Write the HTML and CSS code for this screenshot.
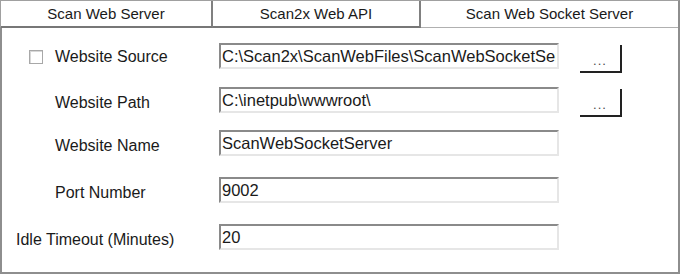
FILE: index.html
```html
<!DOCTYPE html>
<html>
<head>
    <title>Scan Web Socket Server</title>
    <link rel="stylesheet" href="styles.css">
</head>
<body>
    <div class="tabs">
        <div class="tab">Scan Web Server</div>
        <div class="tab">Scan2x Web API</div>
        <div class="tab active">Scan Web Socket Server</div>
    </div>
    <div class="panel">
        <form class="settings">
            <label class="field-label check-label">
                <span class="checkbox"></span>Website Source
            </label>
            <input class="text-box" type="text" value="C:\Scan2x\ScanWebFiles\ScanWebSocketServer" readonly>
            <button type="button" class="browse">...</button>

            <label class="field-label">Website Path</label>
            <input class="text-box" type="text" value="C:\inetpub\wwwroot\" readonly>
            <button type="button" class="browse">...</button>

            <label class="field-label">Website Name</label>
            <input class="text-box" type="text" value="ScanWebSocketServer" readonly>
            <span></span>

            <label class="field-label">Port Number</label>
            <input class="text-box" type="text" value="9002" readonly>
            <span></span>

            <label class="field-label wide-label">Idle Timeout (Minutes)</label>
            <input class="text-box" type="text" value="20" readonly>
            <span></span>
        </form>
    </div>
</body>
</html>
```

FILE: styles.css
```css
* {
    box-sizing: border-box;
}
body {
    margin: 0;
    width: 680px;
    background: #fff;
    color: #1a1a1a;
    font-family: "Liberation Sans", Arial, sans-serif;
}

/* tab strip */
.tabs {
    display: grid;
    grid-template-columns: 212px 208px 1fr;
    height: 27px;
    border-top: 1px solid #a0a0a0;
    border-left: 1px solid #a0a0a0;
    border-right: 2px solid #8e8e8e;
}
.tab {
    border-right: 2px solid #808080;
    border-bottom: 2px solid #777;
    text-align: center;
    font-size: 15px;
    line-height: 25px;
}
.tab.active {
    border-right: none;
    border-bottom: 1px solid #b0b0b0;
}

/* tab page */
.panel {
    height: 247px;
    border: 2px solid #8e8e8e;
    border-top: none;
}
.settings {
    display: grid;
    grid-template-columns: 196px 340px 42px;
    grid-template-rows: 44px 43px 47px 47px 26px;
    column-gap: 21px;
    padding-top: 16px;
}
.field-label {
    display: flex;
    align-items: center;
    height: 26px;
    padding: 6px 0 0 53px;
    font-size: 16px;
    white-space: nowrap;
}
.check-label {
    padding: 2px 0 0 27px;
}
.wide-label {
    padding-left: 14px;
}
.checkbox {
    width: 14px;
    height: 14px;
    margin-right: 12px;
    border: 1px solid #a8a8a8;
    box-shadow: inset 1px 1px 0 #d8d8d8;
}
.text-box {
    width: 340px;
    height: 26px;
    padding: 0 1px;
    border-style: solid;
    border-width: 2px;
    border-color: #8a8a8a #e6e6e6 #e6e6e6 #8a8a8a;
    font-family: "Liberation Sans", Arial, sans-serif;
    font-size: 16.5px;
    color: #1a1a1a;
    outline: none;
}
.browse {
    align-self: start;
    width: 42px;
    height: 28px;
    margin-top: 2px;
    padding: 4px 0 0;
    background: #fff;
    border: none;
    border-right: 2px solid #222;
    border-bottom: 2px solid #222;
    font-family: "Liberation Sans", Arial, sans-serif;
    font-size: 13px;
    letter-spacing: 1px;
    color: #4a4a4a;
}
```
